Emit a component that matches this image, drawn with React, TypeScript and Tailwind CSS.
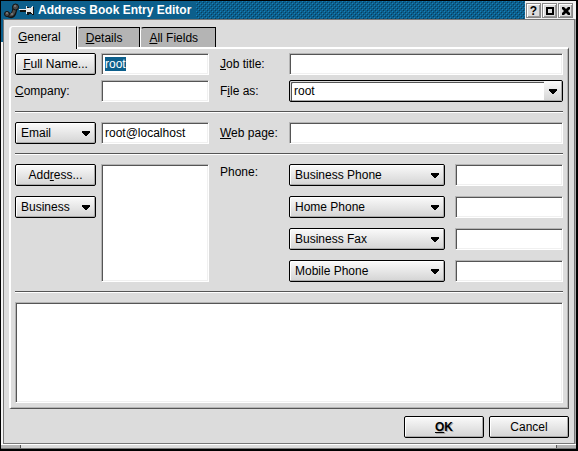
import React, { useEffect, useRef } from "react";

const FONT = "font-['Liberation_Sans',Arial,sans-serif] text-[12px] leading-4";
const SUNKEN =
  "block w-full min-w-0 resize-none rounded-none border border-t-[#b4b4b4] border-l-[#b4b4b4] border-r-white border-b-white bg-white px-[3px] shadow-[inset_1px_1px_0_#555,inset_-1px_-1px_0_#f0f0f0] outline-none selection:bg-[#0c5f8c] selection:text-white";
const RAISED =
  "rounded-[2px] border border-black bg-linear-to-b from-[#fafafa] to-[#d4d4d4] shadow-[inset_1px_1px_0_#fff,inset_-1px_-1px_0_#aaa]";

function Caret() {
  return (
    <svg
      className="pointer-events-none absolute top-[9px] right-[6px]"
      width="8"
      height="5"
      viewBox="0 0 8 5"
      shapeRendering="crispEdges"
    >
      <path d="M0 0h8v2H7v1H6v1H5v1H3V4H2V3H1V2H0z" fill="#000" />
    </svg>
  );
}

function Drop({ label, text, className = "" }: { label: string; text: string; className?: string }) {
  return (
    <div className={`relative h-[22px] ${className}`}>
      <select aria-label={label} className={`block h-[22px] w-full appearance-none pl-[5px] outline-none ${RAISED}`}>
        <option>{text}</option>
      </select>
      <Caret />
    </div>
  );
}

function Combo({ id, text }: { id: string; text: string }) {
  return (
    <div className="relative h-[22px]">
      <select
        id={id}
        className="block h-[22px] w-full appearance-none rounded-[2px] border border-black bg-white pl-1 shadow-[inset_1px_1px_0_#dcdcdc,inset_2px_2px_0_#555,inset_-1px_-1px_0_#aaa] outline-none"
      >
        <option>{text}</option>
      </select>
      <span className="pointer-events-none absolute top-px right-px h-5 w-[18px] bg-linear-to-b from-[#fafafa] to-[#d4d4d4] shadow-[inset_-1px_-1px_0_#aaa]" />
      <Caret />
    </div>
  );
}

function Rule() {
  return <hr className="my-[9px] h-[2px] border-0 border-t border-b border-t-[#555] border-b-white" />;
}

function Tab({ letter, rest, active = false }: { letter: string; rest: string; active?: boolean }) {
  return (
    <button
      type="button"
      role="tab"
      aria-selected={active}
      className={
        active
          ? "z-10 -mb-[2px] h-[23px] rounded-tl-[4px] border-t border-r border-l-2 border-white border-r-black bg-[#dcdcdc] pr-[15px] pb-[2px] pl-[7px]"
          : "h-5 rounded-tl-[4px] border-t border-r border-l border-black border-l-white bg-[#b4b4b4] pr-[17px] pl-2"
      }
    >
      <u>{letter}</u>
      {rest}
    </button>
  );
}

function TitleButton({ label, children }: { label: string; children: React.ReactNode }) {
  return (
    <button
      type="button"
      aria-label={label}
      className="flex h-[15px] w-[15px] items-center justify-center border border-[#888] bg-[#dcdcdc] shadow-[inset_1px_1px_0_#fff,inset_-1px_-1px_0_#999]"
    >
      {children}
    </button>
  );
}

const phones = ["Business Phone", "Home Phone", "Business Fax", "Mobile Phone"];

export default function App() {
  const nameRef = useRef<HTMLInputElement>(null);
  useEffect(() => {
    nameRef.current?.focus();
    nameRef.current?.select();
  }, []);

  return (
    <div className={`relative border border-r-2 border-b-2 border-black bg-[#dcdcdc] text-black ${FONT}`}>
      <header className="flex h-[18px] items-center bg-[#0c5f8c]">
        <svg className="ml-[3px] shrink-0" width="31" height="18" viewBox="0 0 31 18">
          <path d="M3 13C9 17 10 13 11 7" stroke="#111" strokeWidth="5" fill="none" />
          <path d="M3 13C9 16 10 12 11 7" stroke="#4c4c4c" strokeWidth="3" fill="none" />
          <circle cx="3" cy="13" r="2.5" fill="#4c4c4c" stroke="#111" />
          <circle cx="11.5" cy="6" r="3" fill="#4c4c4c" stroke="#111" />
          <path d="M2 12h2M10 5h2M7 13h2" stroke="#999" />
          <g shapeRendering="crispEdges">
            <path d="M16 9h7v2h-7zM23 6h2v8h-2zM25 8h4v5h-4zM28 6h2v8h-2z" fill="#111" />
            <path d="M15 8h7v1h-7zM22 5h1v8h-1zM23 7h4v4h-4zM27 6h1v6h-1zM28 5h1v8h-1z" fill="#e8e8e8" />
          </g>
        </svg>
        <h1 className="mr-[5px] ml-[3px] font-bold whitespace-nowrap text-white">Address Book Entry Editor</h1>
        <svg className="h-[18px] min-w-0 flex-1" shapeRendering="crispEdges" aria-hidden="true">
          <defs>
            <pattern id="grip" width="4" height="4" patternUnits="userSpaceOnUse">
              <path d="M0 2h1v1H0zM2 0h1v1H2z" fill="#1482bc" />
              <path d="M1 3h1v1H1zM3 1h1v1H3z" fill="#083c5c" />
            </pattern>
          </defs>
          <rect width="100%" height="100%" fill="url(#grip)" />
        </svg>
        <div className="flex h-[18px] items-center gap-px bg-[#f0f0f0] pt-px pr-[3px] pl-px">
          <TitleButton label="Help">
            <b>?</b>
          </TitleButton>
          <TitleButton label="Maximize">
            <span className="h-2 w-2 border-2 border-black" />
          </TitleButton>
          <TitleButton label="Close">
            <svg width="8" height="8" viewBox="0 0 8 8">
              <path d="M0 0h2l2 2 2-2h2v2L6 4l2 2v2H6L4 6 2 8H0V6l2-2-2-2z" fill="#000" />
            </svg>
          </TitleButton>
        </div>
      </header>
      <span className="absolute top-[18px] left-0 z-10 h-[23px] w-[2px] bg-[#0c5f8c]" />

      <div className="border-r border-l-2 border-r-[#aaa] border-l-[#f4f4f4]">
        <main className="border border-[#777] px-[5px] pt-[6px] pb-[5px]">
          <div role="tablist" className="flex items-end">
            <Tab letter="G" rest="eneral" active />
            <Tab letter="D" rest="etails" />
            <Tab letter="A" rest="ll Fields" />
          </div>

          <form>
            <section className="border-t-2 border-r border-b border-l-2 border-white border-r-[#555] border-b-[#555] pt-1 pr-[5px] pb-[5px] pl-1 shadow-[inset_-1px_-1px_0_#b4b4b4]">
              <div className="flex gap-[11px]">
                <div className="grid w-[194px] grid-cols-[81px_1fr] items-center gap-[5px]">
                  <button type="button" className={`h-[22px] ${RAISED}`}>
                    <u>F</u>ull Name...
                  </button>
                  <input ref={nameRef} aria-label="Full name" className={`h-[22px] ${SUNKEN}`} defaultValue="root" />
                  <label htmlFor="company">
                    <u>C</u>ompany:
                  </label>
                  <input id="company" className={`h-[22px] ${SUNKEN}`} />
                </div>
                <div className="grid flex-1 grid-cols-[69px_1fr] items-center gap-y-[5px]">
                  <label htmlFor="job">
                    <u>J</u>ob title:
                  </label>
                  <input id="job" className={`h-[22px] ${SUNKEN}`} />
                  <label htmlFor="fileas">
                    F<u>i</u>le as:
                  </label>
                  <Combo id="fileas" text="root" />
                </div>
              </div>
              <Rule />
              <div className="flex gap-[11px]">
                <div className="grid w-[194px] grid-cols-[81px_1fr] items-center gap-[5px]">
                  <Drop label="Email type" text="Email" />
                  <input aria-label="Email" className={`h-[22px] ${SUNKEN}`} defaultValue="root@localhost" />
                </div>
                <div className="grid flex-1 grid-cols-[69px_1fr] items-center">
                  <label htmlFor="web">
                    <u>W</u>eb page:
                  </label>
                  <input id="web" className={`h-[22px] ${SUNKEN}`} />
                </div>
              </div>
              <Rule />
              <div className="flex gap-[11px]">
                <div className="grid w-[194px] grid-cols-[81px_1fr] gap-[5px]">
                  <div className="flex flex-col gap-[10px]">
                    <button type="button" className={`h-[22px] ${RAISED}`}>
                      Add<u>r</u>ess...
                    </button>
                    <Drop label="Address type" text="Business" />
                  </div>
                  <textarea aria-label="Address" className={`h-full ${SUNKEN}`} />
                </div>
                <div className="grid flex-1 grid-cols-[69px_1fr]">
                  <span>Phone:</span>
                  <div className="flex flex-col gap-[10px]">
                    {phones.map((phone) => (
                      <div key={phone} className="flex gap-[10px]">
                        <Drop label="Phone type" text={phone} className="w-[156px] shrink-0" />
                        <input aria-label={phone} className={`h-[22px] ${SUNKEN}`} />
                      </div>
                    ))}
                  </div>
                </div>
              </div>
              <Rule />
              <textarea aria-label="Notes" className={`h-[101px] ${SUNKEN}`} />
            </section>

            <div className="mt-[7px] flex justify-end gap-[5px]">
              <button type="submit" className={`h-[22px] w-20 font-bold text-shadow-[1px_1px_0_#aaa] ${RAISED}`}>
                <u>O</u>K
              </button>
              <button type="button" className={`h-[22px] w-20 ${RAISED}`}>
                Cancel
              </button>
            </div>
          </form>
        </main>
      </div>
      <footer className="flex h-[5px] justify-between border-t border-b border-t-white border-b-[#777]">
        <span className="w-5 border-r border-[#555] bg-[#b4b4b4]" />
        <span className="w-5 border-l border-[#555] bg-[#b4b4b4]" />
      </footer>
    </div>
  );
}
